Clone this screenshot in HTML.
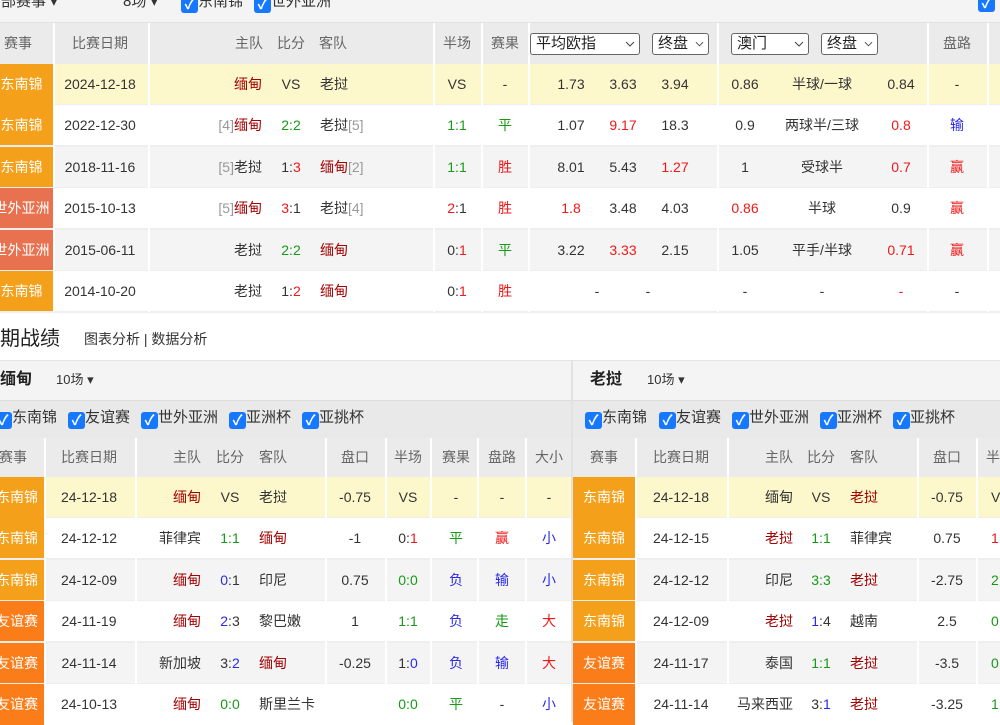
<!DOCTYPE html>
<html><head><meta charset="utf-8">
<style>
*{margin:0;padding:0;box-sizing:border-box}
body{width:1000px;height:722px;overflow:hidden;background:#fff;font-family:"Liberation Sans","Noto Sans CJK SC",sans-serif;font-size:14px;color:#333;position:relative}
.a{position:absolute}
.row{position:absolute;left:0;height:42px}
.row span{position:absolute;top:0;line-height:41px;white-space:nowrap}
.c{transform:translateX(-50%)}
.R{transform:translateX(-100%)}
.hd span{color:#666}
.lg{color:#fff;text-align:center}
.rd{color:#a30000}.red{color:#f01818}.g{color:#179a17}.b{color:#2a2ae8}.gr{color:#999}
b{font-weight:normal}
.vl{position:absolute;width:2px;background:#fff}
.cb{display:inline-block;width:17px;height:17px;background:#1677ff;border-radius:3px;color:#fff;font-size:14px;line-height:17px;text-align:center;vertical-align:-3px;font-weight:bold}
.sel{position:absolute;top:33px;height:22px;border:1px solid #666;border-radius:3px;background:#fff;font-size:15px;line-height:20px;padding-left:5px;color:#222;white-space:nowrap}
.sel svg{position:absolute;right:4px;top:7px}
.ck{position:absolute;top:408px;font-size:15px;line-height:20px;white-space:nowrap}
</style></head><body>

<!-- top strip -->
<div class="a" style="left:0;top:0;width:1000px;height:23px;background:#f4f4f4;border-bottom:1px solid #e2e2e2"></div>
<div class="a" style="left:-14px;top:-8px;font-size:15px;line-height:20px">全部赛事 ▾</div>
<div class="a" style="left:123px;top:-8px;font-size:15px;line-height:20px">8场 ▾</div>
<div class="a" style="left:181px;top:-8px;font-size:15px;line-height:20px"><span class="cb">✓</span>东南锦</div>
<div class="a" style="left:254px;top:-8px;font-size:15px;line-height:20px"><span class="cb">✓</span>世外亚洲</div>
<div class="a" style="left:978px;top:-8px"><span class="cb">✓</span></div>

<!-- top table header -->
<div class="row hd" style="top:23px;width:1000px;height:41px;background:#ebebeb">
<span class="c" style="left:18px">赛事</span><span class="c" style="left:100px">比赛日期</span>
<span class="R" style="left:263px">主队</span><span class="c" style="left:291px">比分</span><span style="left:319px">客队</span>
<span class="c" style="left:457px">半场</span><span class="c" style="left:505px">赛果</span><span class="c" style="left:957px">盘路</span>
</div>
<div class="sel" style="left:530px;width:110px">平均欧指<svg width="10" height="6" viewBox="0 0 10 6"><polyline points="1,1 5,5 9,1" fill="none" stroke="#444" stroke-width="1"/></svg></div>
<div class="sel" style="left:652px;width:57px">终盘<svg width="9" height="6" viewBox="0 0 10 6"><polyline points="1,1 5,5 9,1" fill="none" stroke="#444" stroke-width="1"/></svg></div>
<div class="sel" style="left:731px;width:78px">澳门<svg width="10" height="6" viewBox="0 0 10 6"><polyline points="1,1 5,5 9,1" fill="none" stroke="#444" stroke-width="1"/></svg></div>
<div class="sel" style="left:821px;width:57px">终盘<svg width="9" height="6" viewBox="0 0 10 6"><polyline points="1,1 5,5 9,1" fill="none" stroke="#444" stroke-width="1"/></svg></div>

<!-- top rows -->
<div class="row" style="top:64px;width:1000px;background:#fdf8cc;border-bottom:2px solid #eee">
<span class="lg" style="left:-10px;width:63px;background:#f5a01a;height:41px">东南锦</span>
<span class="c" style="left:100px">2024-12-18</span><span class="R rd" style="left:262px">缅甸</span><span class="c" style="left:291px">VS</span><span style="left:320px">老挝</span>
<span class="c" style="left:457px">VS</span><span class="c" style="left:505px">-</span>
<span class="c" style="left:571px">1.73</span><span class="c" style="left:623px">3.63</span><span class="c" style="left:675px">3.94</span>
<span class="c" style="left:745px">0.86</span><span class="c" style="left:822px">半球/一球</span><span class="c" style="left:901px">0.84</span><span class="c" style="left:957px">-</span>
</div>
<div class="row" style="top:105px;width:1000px;background:#fff;border-bottom:2px solid #eee">
<span class="lg" style="left:-10px;width:63px;background:#f5a01a;height:40px">东南锦</span>
<span class="c" style="left:100px">2022-12-30</span><span class="R" style="left:262px"><b class="gr">[4]</b><b class="rd">缅甸</b></span><span class="c g" style="left:291px">2:2</span><span style="left:320px">老挝<b class="gr">[5]</b></span>
<span class="c g" style="left:457px">1:1</span><span class="c g" style="left:505px">平</span>
<span class="c" style="left:571px">1.07</span><span class="c red" style="left:623px">9.17</span><span class="c" style="left:675px">18.3</span>
<span class="c" style="left:745px">0.9</span><span class="c" style="left:822px">两球半/三球</span><span class="c red" style="left:901px">0.8</span><span class="c b" style="left:957px">输</span>
</div>
<div class="row" style="top:147px;width:1000px;background:#f4f4f4;border-bottom:2px solid #eee">
<span class="lg" style="left:-10px;width:63px;background:#f5a01a;height:40px">东南锦</span>
<span class="c" style="left:100px">2018-11-16</span><span class="R" style="left:262px"><b class="gr">[5]</b>老挝</span><span class="c" style="left:291px">1:<b class="red">3</b></span><span style="left:320px"><b class="rd">缅甸</b><b class="gr">[2]</b></span>
<span class="c g" style="left:457px">1:1</span><span class="c red" style="left:505px">胜</span>
<span class="c" style="left:571px">8.01</span><span class="c" style="left:623px">5.43</span><span class="c red" style="left:675px">1.27</span>
<span class="c" style="left:745px">1</span><span class="c" style="left:822px">受球半</span><span class="c red" style="left:901px">0.7</span><span class="c red" style="left:957px">赢</span>
</div>
<div class="row" style="top:188px;width:1000px;background:#fff;border-bottom:2px solid #eee">
<span class="lg" style="left:-10px;width:63px;background:#e8714f;height:40px">世外亚洲</span>
<span class="c" style="left:100px">2015-10-13</span><span class="R" style="left:262px"><b class="gr">[5]</b><b class="rd">缅甸</b></span><span class="c" style="left:291px"><b class="red">3</b>:1</span><span style="left:320px">老挝<b class="gr">[4]</b></span>
<span class="c" style="left:457px"><b class="red">2</b>:1</span><span class="c red" style="left:505px">胜</span>
<span class="c red" style="left:571px">1.8</span><span class="c" style="left:623px">3.48</span><span class="c" style="left:675px">4.03</span>
<span class="c red" style="left:745px">0.86</span><span class="c" style="left:822px">半球</span><span class="c" style="left:901px">0.9</span><span class="c red" style="left:957px">赢</span>
</div>
<div class="row" style="top:230px;width:1000px;background:#f4f4f4;border-bottom:2px solid #eee">
<span class="lg" style="left:-10px;width:63px;background:#e8714f;height:40px">世外亚洲</span>
<span class="c" style="left:100px">2015-06-11</span><span class="R" style="left:262px">老挝</span><span class="c g" style="left:291px">2:2</span><span class="rd" style="left:320px">缅甸</span>
<span class="c" style="left:457px">0:<b class="red">1</b></span><span class="c g" style="left:505px">平</span>
<span class="c" style="left:571px">3.22</span><span class="c red" style="left:623px">3.33</span><span class="c" style="left:675px">2.15</span>
<span class="c" style="left:745px">1.05</span><span class="c" style="left:822px">平手/半球</span><span class="c red" style="left:901px">0.71</span><span class="c red" style="left:957px">赢</span>
</div>
<div class="row" style="top:271px;width:1000px;background:#fff;border-bottom:2px solid #eee">
<span class="lg" style="left:-10px;width:63px;background:#f5a01a;height:40px">东南锦</span>
<span class="c" style="left:100px">2014-10-20</span><span class="R" style="left:262px">老挝</span><span class="c" style="left:291px">1:<b class="red">2</b></span><span class="rd" style="left:320px">缅甸</span>
<span class="c" style="left:457px">0:<b class="red">1</b></span><span class="c red" style="left:505px">胜</span>
<span class="c" style="left:597px">-</span><span class="c" style="left:648px">-</span>
<span class="c" style="left:745px">-</span><span class="c" style="left:822px">-</span><span class="c red" style="left:901px">-</span><span class="c" style="left:957px">-</span>
</div>
<!-- top vertical lines -->
<div class="vl" style="left:53px;top:23px;height:289px"></div>
<div class="vl" style="left:148px;top:23px;height:289px"></div>
<div class="vl" style="left:433px;top:23px;height:289px"></div>
<div class="vl" style="left:481px;top:23px;height:289px"></div>
<div class="vl" style="left:528px;top:23px;height:289px"></div>
<div class="vl" style="left:717px;top:23px;height:289px"></div>
<div class="vl" style="left:927px;top:23px;height:289px"></div>
<div class="vl" style="left:987px;top:23px;height:289px"></div>

<!-- title -->
<div class="a" style="left:-20px;top:325px;font-size:20px;line-height:28px;color:#222">近期战绩</div>
<div class="a" style="left:84px;top:329px;font-size:14px;line-height:20px;color:#333">图表分析 | 数据分析</div>

<!-- panels background -->
<div class="a" style="left:0;top:360px;width:1000px;height:40px;background:#f4f4f4;border-top:1px solid #e4e4e4"></div>
<div class="a" style="left:0;top:400px;width:1000px;height:38px;background:#e9e9e9;border-top:1px solid #ddd"></div>
<div class="a" style="left:0;top:368px;font-size:16px;font-weight:bold;line-height:24px;color:#222">缅甸</div>
<div class="a" style="left:56px;top:369px;font-size:13px;line-height:22px">10场 ▾</div>
<div class="a" style="left:590px;top:368px;font-size:16px;font-weight:bold;line-height:24px;color:#222">老挝</div>
<div class="a" style="left:647px;top:369px;font-size:13px;line-height:22px">10场 ▾</div>
<div class="ck" style="left:-5px"><span class="cb">✓</span>东南锦</div>
<div class="ck" style="left:68px"><span class="cb">✓</span>友谊赛</div>
<div class="ck" style="left:141px"><span class="cb">✓</span>世外亚洲</div>
<div class="ck" style="left:229px"><span class="cb">✓</span>亚洲杯</div>
<div class="ck" style="left:302px"><span class="cb">✓</span>亚挑杯</div>
<div class="ck" style="left:585px"><span class="cb">✓</span>东南锦</div>
<div class="ck" style="left:659px"><span class="cb">✓</span>友谊赛</div>
<div class="ck" style="left:732px"><span class="cb">✓</span>世外亚洲</div>
<div class="ck" style="left:820px"><span class="cb">✓</span>亚洲杯</div>
<div class="ck" style="left:893px"><span class="cb">✓</span>亚挑杯</div>

<!-- lower header -->
<div class="row hd" style="top:438px;width:1000px;height:39px;background:#ebebeb">
<span class="c" style="left:13px;line-height:39px">赛事</span><span class="c" style="left:89px;line-height:39px">比赛日期</span>
<span class="c" style="left:187px;line-height:39px">主队</span><span class="c" style="left:230px;line-height:39px">比分</span><span class="c" style="left:273px;line-height:39px">客队</span>
<span class="c" style="left:355px;line-height:39px">盘口</span><span class="c" style="left:408px;line-height:39px">半场</span><span class="c" style="left:456px;line-height:39px">赛果</span><span class="c" style="left:502px;line-height:39px">盘路</span><span class="c" style="left:549px;line-height:39px">大小</span>
<span class="c" style="left:604px;line-height:39px">赛事</span><span class="c" style="left:681px;line-height:39px">比赛日期</span>
<span class="c" style="left:779px;line-height:39px">主队</span><span class="c" style="left:821px;line-height:39px">比分</span><span class="c" style="left:864px;line-height:39px">客队</span>
<span class="c" style="left:947px;line-height:39px">盘口</span><span style="left:986px;line-height:39px">半场</span>
</div>

<!-- lower rows -->
<div class="row" style="top:477px;width:1000px;background:#fdf8cc;border-bottom:2px solid #eee">
<span class="lg" style="left:-10px;width:54px;background:#f5a01a;height:41px">东南锦</span>
<span class="c" style="left:89px">24-12-18</span><span class="R rd" style="left:201px">缅甸</span><span class="c" style="left:230px">VS</span><span style="left:259px">老挝</span>
<span class="c" style="left:355px">-0.75</span><span class="c" style="left:408px">VS</span><span class="c" style="left:456px">-</span><span class="c" style="left:502px">-</span><span class="c" style="left:549px">-</span>
<span class="lg" style="left:573px;width:62px;background:#f5a01a;height:41px">东南锦</span>
<span class="c" style="left:681px">24-12-18</span><span class="R" style="left:793px">缅甸</span><span class="c" style="left:821px">VS</span><span class="rd" style="left:850px">老挝</span>
<span class="c" style="left:947px">-0.75</span><span style="left:991px">VS</span>
</div>
<div class="row" style="top:518px;width:1000px;background:#fff;border-bottom:2px solid #eee">
<span class="lg" style="left:-10px;width:54px;background:#f5a01a;height:40px">东南锦</span>
<span class="c" style="left:89px">24-12-12</span><span class="R" style="left:201px">菲律宾</span><span class="c g" style="left:230px">1:1</span><span class="rd" style="left:259px">缅甸</span>
<span class="c" style="left:355px">-1</span><span class="c" style="left:408px">0:<b class="red">1</b></span><span class="c g" style="left:456px">平</span><span class="c red" style="left:502px">赢</span><span class="c b" style="left:549px">小</span>
<span class="lg" style="left:573px;width:62px;background:#f5a01a;height:40px">东南锦</span>
<span class="c" style="left:681px">24-12-15</span><span class="R rd" style="left:793px">老挝</span><span class="c g" style="left:821px">1:1</span><span style="left:850px">菲律宾</span>
<span class="c" style="left:947px">0.75</span><span class="red" style="left:991px">1:</span>
</div>
<div class="row" style="top:560px;width:1000px;background:#f4f4f4;border-bottom:2px solid #eee">
<span class="lg" style="left:-10px;width:54px;background:#f5a01a;height:40px">东南锦</span>
<span class="c" style="left:89px">24-12-09</span><span class="R rd" style="left:201px">缅甸</span><span class="c" style="left:230px"><b class="b">0</b>:1</span><span style="left:259px">印尼</span>
<span class="c" style="left:355px">0.75</span><span class="c g" style="left:408px">0:0</span><span class="c b" style="left:456px">负</span><span class="c b" style="left:502px">输</span><span class="c b" style="left:549px">小</span>
<span class="lg" style="left:573px;width:62px;background:#f5a01a;height:40px">东南锦</span>
<span class="c" style="left:681px">24-12-12</span><span class="R" style="left:793px">印尼</span><span class="c g" style="left:821px">3:3</span><span class="rd" style="left:850px">老挝</span>
<span class="c" style="left:947px">-2.75</span><span class="g" style="left:991px">2:</span>
</div>
<div class="row" style="top:601px;width:1000px;background:#fff;border-bottom:2px solid #eee">
<span class="lg" style="left:-10px;width:54px;background:#fa7d19;height:40px">友谊赛</span>
<span class="c" style="left:89px">24-11-19</span><span class="R rd" style="left:201px">缅甸</span><span class="c" style="left:230px"><b class="b">2</b>:3</span><span style="left:259px">黎巴嫩</span>
<span class="c" style="left:355px">1</span><span class="c g" style="left:408px">1:1</span><span class="c b" style="left:456px">负</span><span class="c g" style="left:502px">走</span><span class="c red" style="left:549px">大</span>
<span class="lg" style="left:573px;width:62px;background:#f5a01a;height:40px">东南锦</span>
<span class="c" style="left:681px">24-12-09</span><span class="R rd" style="left:793px">老挝</span><span class="c" style="left:821px"><b class="b">1</b>:4</span><span style="left:850px">越南</span>
<span class="c" style="left:947px">2.5</span><span class="g" style="left:991px">0:</span>
</div>
<div class="row" style="top:643px;width:1000px;background:#f4f4f4;border-bottom:2px solid #eee">
<span class="lg" style="left:-10px;width:54px;background:#fa7d19;height:40px">友谊赛</span>
<span class="c" style="left:89px">24-11-14</span><span class="R" style="left:201px">新加坡</span><span class="c" style="left:230px">3:<b class="b">2</b></span><span class="rd" style="left:259px">缅甸</span>
<span class="c" style="left:355px">-0.25</span><span class="c" style="left:408px">1:<b class="b">0</b></span><span class="c b" style="left:456px">负</span><span class="c b" style="left:502px">输</span><span class="c red" style="left:549px">大</span>
<span class="lg" style="left:573px;width:62px;background:#fa7d19;height:40px">友谊赛</span>
<span class="c" style="left:681px">24-11-17</span><span class="R" style="left:793px">泰国</span><span class="c g" style="left:821px">1:1</span><span class="rd" style="left:850px">老挝</span>
<span class="c" style="left:947px">-3.5</span><span class="g" style="left:991px">0:</span>
</div>
<div class="row" style="top:684px;width:1000px;background:#fff;height:38px">
<span class="lg" style="left:-10px;width:54px;background:#fa7d19;height:41px">友谊赛</span>
<span class="c" style="left:89px">24-10-13</span><span class="R rd" style="left:201px">缅甸</span><span class="c g" style="left:230px">0:0</span><span style="left:259px">斯里兰卡</span>
<span class="c g" style="left:408px">0:0</span><span class="c g" style="left:456px">平</span><span class="c" style="left:502px">-</span><span class="c b" style="left:549px">小</span>
<span class="lg" style="left:573px;width:62px;background:#fa7d19;height:41px">友谊赛</span>
<span class="c" style="left:681px">24-11-14</span><span class="R" style="left:793px">马来西亚</span><span class="c" style="left:821px">3:<b class="b">1</b></span><span class="rd" style="left:850px">老挝</span>
<span class="c" style="left:947px">-3.25</span><span class="g" style="left:991px">1:</span>
</div>

<!-- lower vertical lines -->
<div class="vl" style="left:44px;top:438px;height:284px"></div>
<div class="vl" style="left:135px;top:438px;height:284px"></div>
<div class="vl" style="left:325px;top:438px;height:284px"></div>
<div class="vl" style="left:385px;top:438px;height:284px"></div>
<div class="vl" style="left:430px;top:438px;height:284px"></div>
<div class="vl" style="left:477px;top:438px;height:284px"></div>
<div class="vl" style="left:525px;top:438px;height:284px"></div>
<div class="vl" style="left:635px;top:438px;height:284px"></div>
<div class="vl" style="left:727px;top:438px;height:284px"></div>
<div class="vl" style="left:917px;top:438px;height:284px"></div>
<div class="vl" style="left:976px;top:438px;height:284px"></div>
<div class="a" style="left:571px;top:360px;width:2px;height:362px;background:#e2e2e2"></div>
</body></html>
